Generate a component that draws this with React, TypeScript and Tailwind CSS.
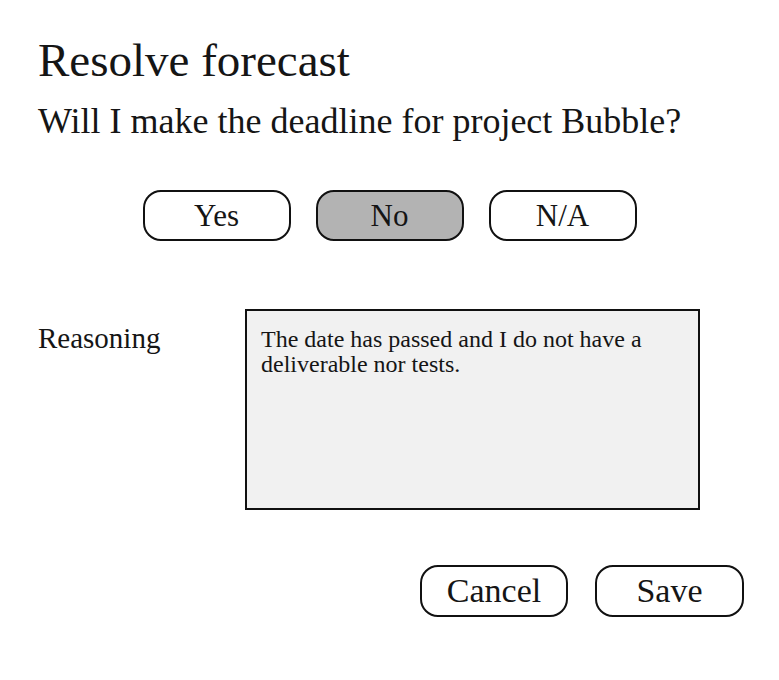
import React from "react";

const serif = { fontFamily: '"Liberation Serif", "DejaVu Serif", serif' };

const options = ["Yes", "No", "N/A"];

export default function App() {
  const [choice, setChoice] = React.useState("No");
  const [reasoning, setReasoning] = React.useState(
    "The date has passed and I do not have a deliverable nor tests."
  );

  return (
    <div
      className="min-h-screen w-full bg-white px-[38px] pt-[37px] text-[#151515]"
      style={serif}
    >
      <h1 className="text-[47px] leading-[47px] font-normal">Resolve forecast</h1>
      <p className="mt-[19px] text-[36px] leading-[36px]">
        Will I make the deadline for project Bubble?
      </p>

      {/* Answer choices */}
      <div className="mt-[51px] flex justify-center gap-[25px]">
        {options.map((opt) => (
          <button
            key={opt}
            onClick={() => setChoice(opt)}
            className={`flex h-[51px] w-[148px] items-center justify-center rounded-[18px] border-2 border-[#111] text-[31px] leading-[31px] ${
              choice === opt ? "bg-[#b3b3b3]" : "bg-white"
            }`}
          >
            {opt}
          </button>
        ))}
      </div>

      <div className="mt-[68px] flex">
        <label className="w-[207px] shrink-0 pt-[15px] text-[29px] leading-[29px]">
          Reasoning
        </label>
        <textarea
          value={reasoning}
          onChange={(e) => setReasoning(e.target.value)}
          className="h-[201px] w-[455px] resize-none border-2 border-[#111] bg-[#f1f1f1] px-[14px] pt-[16px] text-[24px] leading-[25px] outline-none"
          style={serif}
        />
      </div>

      <div className="mt-[55px] mr-[-3px] flex justify-end gap-[27px]">
        <button className="flex h-[52px] w-[148px] items-center justify-center rounded-[18px] border-2 border-[#111] bg-white text-[34px] leading-[34px]">
          Cancel
        </button>
        <button className="flex h-[52px] w-[149px] items-center justify-center rounded-[18px] border-2 border-[#111] bg-white text-[34px] leading-[34px]">
          Save
        </button>
      </div>
    </div>
  );
}
